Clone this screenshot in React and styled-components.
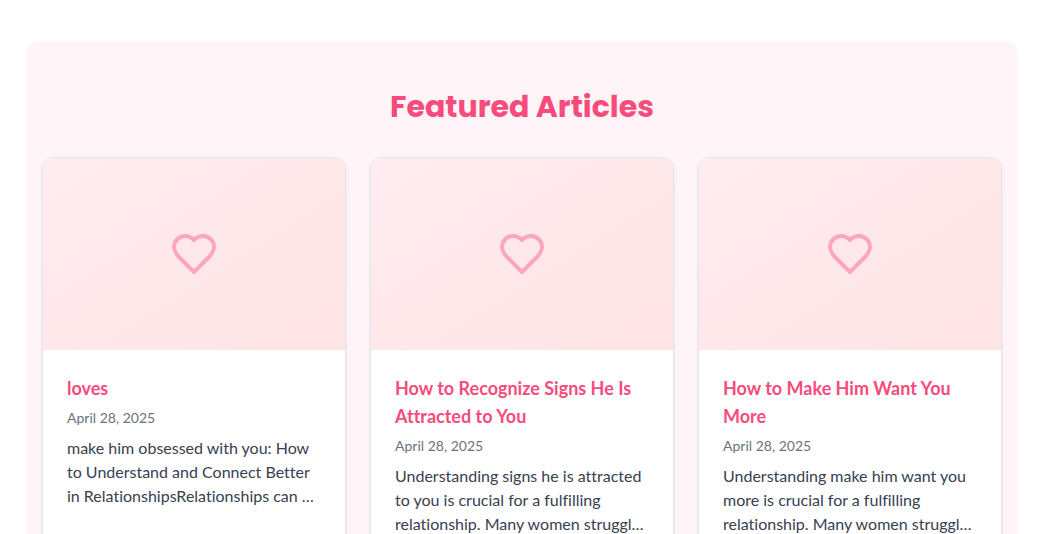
import React from "react";
import styled, { createGlobalStyle } from "styled-components";

const GlobalStyle = createGlobalStyle`
  *, *::before, *::after { box-sizing: border-box; }
  body {
    margin: 0;
    background: #ffffff;
    color: #374151;
    font-family: Lato, "Liberation Sans", sans-serif;
    font-size: 16px;
    line-height: 24px;
    font-variant-ligatures: no-common-ligatures;
  }
`;

const Page = styled.main`
  padding: 41px 20px 48px 26px;
`;

const Featured = styled.section`
  padding: 48px 16px;
  border-radius: 12px;
  background: #fff5f8;
`;

const Heading = styled.h2`
  margin: 0 0 32px;
  color: #f74b7c;
  font-family: Poppins, Inter, sans-serif;
  font-size: 30px;
  font-weight: 700;
  line-height: 36px;
  text-align: center;
`;

const CardGrid = styled.div`
  display: grid;
  grid-template-columns: repeat(3, minmax(0, 1fr));
  gap: 24px;
`;

const Card = styled.article`
  overflow: hidden;
  border: 1px solid #e2e8f0;
  border-radius: 12px;
  background: #ffffff;
  box-shadow: 0 1px 3px rgba(0, 0, 0, 0.1), 0 1px 2px -1px rgba(0, 0, 0, 0.1);
`;

const Cover = styled.div`
  display: flex;
  align-items: center;
  justify-content: center;
  height: 192px;
  background: linear-gradient(to bottom right, #ffecf1, #fee3e3);
`;

const Heart = styled.svg`
  width: 48px;
  height: 48px;
  fill: none;
  stroke: #fba6bd;
  stroke-width: 2;
  stroke-linecap: round;
  stroke-linejoin: round;
`;

const Content = styled.div`
  padding: 24px;
`;

const Title = styled.h3`
  margin: 0 0 6px;
  font-size: 18px;
  font-weight: 700;
  line-height: 28px;
`;

const TitleLink = styled.a`
  color: #f74b7c;
  text-decoration: none;
`;

const PublishDate = styled.time`
  display: block;
  margin-bottom: 8px;
  color: #6b7280;
  font-size: 14px;
  line-height: 20px;
`;

const Excerpt = styled.p`
  margin: 0;
  color: #374151;
`;

const articles = [
  {
    title: "loves",
    date: "April 28, 2025",
    excerpt:
      "make him obsessed with you: How to Understand and Connect Better in RelationshipsRelationships can …",
  },
  {
    title: "How to Recognize Signs He Is Attracted to You",
    date: "April 28, 2025",
    excerpt:
      "Understanding signs he is attracted to you is crucial for a fulfilling relationship. Many women struggl…",
  },
  {
    title: "How to Make Him Want You More",
    date: "April 28, 2025",
    excerpt:
      "Understanding make him want you more is crucial for a fulfilling relationship. Many women struggl…",
  },
];

function ArticleCard({ title, date, excerpt }) {
  return (
    <Card>
      <Cover>
        <Heart viewBox="0 0 24 24" aria-hidden="true">
          <path d="M19 14c1.49-1.46 3-3.21 3-5.5A5.5 5.5 0 0 0 16.5 3c-1.76 0-3 .5-4.5 2-1.5-1.5-2.74-2-4.5-2A5.5 5.5 0 0 0 2 8.5c0 2.3 1.5 4.05 3 5.5l7 7Z" />
        </Heart>
      </Cover>
      <Content>
        <Title>
          <TitleLink href="#">{title}</TitleLink>
        </Title>
        <PublishDate dateTime="2025-04-28">{date}</PublishDate>
        <Excerpt>{excerpt}</Excerpt>
      </Content>
    </Card>
  );
}

export default function App() {
  return (
    <>
      <GlobalStyle />
      <Page>
        <Featured>
          <Heading>Featured Articles</Heading>
          <CardGrid>
            {articles.map((article) => (
              <ArticleCard key={article.title} {...article} />
            ))}
          </CardGrid>
        </Featured>
      </Page>
    </>
  );
}
